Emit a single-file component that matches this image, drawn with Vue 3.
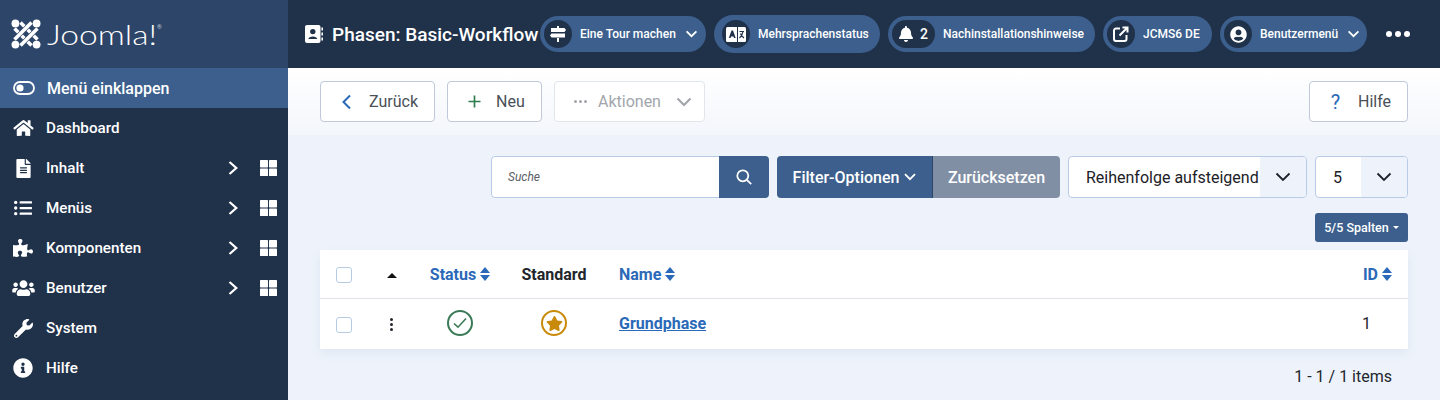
<script setup>
const navItems = [
  { label: 'Dashboard', w: 21, h: 18, box: '0 0 576 512', d: 'M280.37 148.26L96 300.11V464a16 16 0 0 0 16 16l112.06-.29a16 16 0 0 0 15.92-16V368a16 16 0 0 1 16-16h64a16 16 0 0 1 16 16v95.64a16 16 0 0 0 16 16.05L464 480a16 16 0 0 0 16-16V300L295.67 148.26a12.19 12.19 0 0 0-15.3 0zM571.6 251.47L488 182.56V44.05a12 12 0 0 0-12-12h-56a12 12 0 0 0-12 12v72.61L318.47 43a48 48 0 0 0-61 0L4.34 251.47a12 12 0 0 0-1.6 16.9l25.5 31A12 12 0 0 0 45.15 301l235.22-193.74a12.19 12.19 0 0 1 15.3 0L530.9 301a12 12 0 0 0 16.9-1.6l25.5-31a12 12 0 0 0-1.7-16.93z' },
  { label: 'Inhalt', more: true, w: 15, h: 19, box: '0 0 384 512', d: 'M224 136V0H24C10.7 0 0 10.7 0 24v464c0 13.3 10.7 24 24 24h336c13.3 0 24-10.7 24-24V160H248c-13.2 0-24-10.8-24-24zm64 236c0 6.6-5.4 12-12 12H108c-6.6 0-12-5.4-12-12v-8c0-6.6 5.4-12 12-12h168c6.6 0 12 5.4 12 12v8zm0-64c0 6.6-5.4 12-12 12H108c-6.6 0-12-5.4-12-12v-8c0-6.6 5.4-12 12-12h168c6.6 0 12 5.4 12 12v8zm0-72v8c0 6.6-5.4 12-12 12H108c-6.6 0-12-5.4-12-12v-8c0-6.6 5.4-12 12-12h168c6.6 0 12 5.4 12 12zm96-114.1v6.1H256V0h6.1c6.4 0 12.5 2.5 17 7l97.9 98c4.5 4.5 7 10.6 7 16.9z' },
  { label: 'Menüs', more: true, w: 18, h: 18, box: '0 0 512 512', d: 'M48 48a48 48 0 1 0 0 96 48 48 0 0 0 0-96zm0 160a48 48 0 1 0 0 96 48 48 0 0 0 0-96zm0 160a48 48 0 1 0 0 96 48 48 0 0 0 0-96zm448 16H176a16 16 0 0 0-16 16v32a16 16 0 0 0 16 16h320a16 16 0 0 0 16-16v-32a16 16 0 0 0-16-16zm0-320H176a16 16 0 0 0-16 16v32a16 16 0 0 0 16 16h320a16 16 0 0 0 16-16V80a16 16 0 0 0-16-16zm0 160H176a16 16 0 0 0-16 16v32a16 16 0 0 0 16 16h320a16 16 0 0 0 16-16v-32a16 16 0 0 0-16-16z' },
  { label: 'Komponenten', more: true, w: 20, h: 18, box: '0 0 576 512', d: 'M519.442 288.651c-41.519 0-59.5 31.593-82.058 31.593C377.409 320.244 432 144 432 144s-196.288 80-196.288-3.297c0-35.827 36.288-46.25 36.288-85.985C272 19.216 243.885 0 210.539 0c-34.654 0-66.366 18.891-66.366 56.346 0 41.364 31.711 59.277 31.711 81.75C175.885 207.719 0 166.758 0 166.758v333.237s178.635 41.047 178.635-28.662c0-22.473-40-40.107-40-81.471 0-37.456 29.25-56.346 63.577-56.346 33.673 0 61.788 19.216 61.788 54.717 0 39.735-36.288 50.158-36.288 85.985 0 60.803 129.675 25.73 181.23 25.73 0 0-34.725-120.101 25.827-120.101 35.962 0 46.423 36.152 86.308 36.152C556.712 416 576 387.99 576 354.443c0-34.199-18.962-65.792-56.558-65.792z' },
  { label: 'Benutzer', more: true, w: 23, h: 18, box: '0 0 640 512', d: 'M96 224c35.3 0 64-28.7 64-64s-28.7-64-64-64-64 28.7-64 64 28.7 64 64 64zm448 0c35.3 0 64-28.7 64-64s-28.7-64-64-64-64 28.7-64 64 28.7 64 64 64zm32 32h-64c-17.6 0-33.5 7.1-45.1 18.6 40.3 22.1 68.9 62 75.1 109.4h66c17.7 0 32-14.3 32-32v-32c0-35.3-28.7-64-64-64zm-256 0c61.9 0 112-50.1 112-112S381.9 32 320 32 208 82.1 208 144s50.1 112 112 112zm76.8 32h-8.3c-20.8 10-43.9 16-68.5 16s-47.6-6-68.5-16h-8.3C179.6 288 128 339.6 128 403.2V432c0 26.5 21.5 48 48 48h288c26.5 0 48-21.5 48-48v-28.8c0-63.6-51.6-115.2-115.2-115.2zm-223.7-13.4C161.5 263.1 145.6 256 128 256H64c-35.3 0-64 28.7-64 64v32c0 17.7 14.3 32 32 32h65.9c6.3-47.4 34.9-87.3 75.2-109.4z' },
  { label: 'System', w: 19, h: 19, box: '0 0 512 512', d: 'M507.73 109.1c-2.24-9.03-13.54-12.09-20.12-5.51l-74.36 74.36-67.88-11.31-11.31-67.88 74.36-74.36c6.62-6.62 3.43-17.9-5.66-20.16-47.38-11.74-99.55.91-136.58 37.93-39.64 39.64-50.55 97.1-34.05 147.2L18.74 402.76c-24.99 24.99-24.99 65.51 0 90.5 24.99 24.99 65.51 24.99 90.5 0l213.21-213.21c50.12 16.71 107.47 5.68 147.37-34.22 37.07-37.07 49.7-89.32 37.91-136.73zM64 472c-13.25 0-24-10.75-24-24 0-13.26 10.75-24 24-24s24 10.74 24 24c0 13.25-10.75 24-24 24z' },
  { label: 'Hilfe', w: 20, h: 20, box: '0 0 512 512', d: 'M256 8C119.043 8 8 119.083 8 256c0 136.997 111.043 248 248 248s248-111.003 248-248C504 119.083 392.957 8 256 8zm0 110c23.196 0 42 18.804 42 42s-18.804 42-42 42-42-18.804-42-42 18.804-42 42-42zm56 254c0 6.627-5.373 12-12 12h-88c-6.627 0-12-5.373-12-12v-24c0-6.627 5.373-12 12-12h12v-64h-12c-6.627 0-12-5.373-12-12v-24c0-6.627 5.373-12 12-12h64c6.627 0 12 5.373 12 12v100h12c6.627 0 12 5.373 12 12v24z' }
]

const bellPath = 'M224 512c35.32 0 63.97-28.65 63.97-64H160.03c0 35.35 28.65 64 63.97 64zm215.39-149.71c-19.32-20.76-55.47-51.99-55.47-154.29 0-77.7-54.48-139.9-127.94-155.16V32c0-17.67-14.32-32-31.98-32s-31.98 14.33-31.98 32v20.84C118.56 68.1 64.08 130.3 64.08 208c0 102.3-36.15 133.53-55.47 154.29-6 6.45-8.66 14.16-8.61 21.71.11 16.4 12.98 32 32.1 32h383.8c19.12 0 32-15.6 32.1-32 .05-7.55-2.61-15.27-8.61-21.71z'
const userPath = 'M248 8C111 8 0 119 0 256s111 248 248 248 248-111 248-248S385 8 248 8zm0 96c48.6 0 88 39.4 88 88s-39.4 88-88 88-88-39.4-88-88 39.4-88 88-88zm0 344c-58.7 0-111.3-26.6-146.5-68.2 18.8-35.4 55.6-59.8 98.5-59.8 2.4 0 4.8.4 7.1 1.1 13 4.2 26.6 6.9 40.9 6.9 14.3 0 28-2.7 40.9-6.9 2.3-.7 4.7-1.1 7.1-1.1 42.9 0 79.7 24.4 98.5 59.8C359.3 421.4 306.7 448 248 448z'
const starPath = 'M259.3 17.8L194 150.2 47.9 171.5c-26.2 3.8-36.7 36.1-17.7 54.6l105.7 103-25 145.5c-4.5 26.3 23.2 46 46.4 33.7L288 439.6l130.7 68.7c23.2 12.2 50.9-7.4 46.4-33.7l-25-145.5 105.7-103c19-18.5 8.5-50.8-17.7-54.6L382 150.2 316.7 17.8c-11.7-23.6-45.6-23.9-57.4 0z'
</script>

<template>
  <div class="page">
    <aside class="sidebar">
      <div class="logo">
        <svg class="logo-mark" viewBox="0 0 30 30" fill="none">
          <g stroke-width="3.600" stroke="#fff">
            <path d="M3.500 9.500 L20.500 26.500" />
            <path d="M9.500 3.500 L26.500 20.500" />
          </g>
          <g stroke-width="3.600">
            <path d="M26.500 9.500 L9.500 26.500" stroke="#2d4568" stroke-width="4.600" />
            <path d="M26.500 9.500 L9.500 26.500" stroke="#fff" />
            <path d="M20.500 3.500 L3.500 20.500" stroke="#2d4568" stroke-width="4.600" />
            <path d="M20.500 3.500 L3.500 20.500" stroke="#fff" />
          </g>
          <g fill="#fff">
            <circle cx="4.400" cy="4.400" r="3.900" />
            <circle cx="25.600" cy="4.400" r="3.900" />
            <circle cx="4.400" cy="25.600" r="3.900" />
            <circle cx="25.600" cy="25.600" r="3.900" />
          </g>
        </svg>
        <span class="logo-word">Joomla!</span><span class="logo-reg">®</span>
      </div>
      <div class="nav-toggle">
        <svg class="toggle-icon" viewBox="0 0 22 14" fill="none">
          <rect x="1" y="1" width="20" height="12" rx="6" stroke="#fff" stroke-width="1.800" />
          <circle cx="7" cy="7" r="3.600" fill="#fff" />
        </svg>
        Menü einklappen
      </div>
      <nav>
        <div v-for="item in navItems" :key="item.label" class="nav-item">
          <span class="nav-icon">
            <svg :viewBox="item.box" :width="item.w" :height="item.h" fill="#fff"><path :d="item.d" /></svg>
          </span>
          <span class="nav-label">{{ item.label }}</span>
          <template v-if="item.more">
            <svg class="nav-chevron" viewBox="0 0 10 14" fill="none" stroke="#fff" stroke-width="2.200">
              <path d="M1.500 1 L8.300 7 L1.500 13" />
            </svg>
            <svg class="nav-grid" viewBox="0 0 17 16" fill="#fff">
              <rect x="0" y="0" width="8" height="7.400" rx="0.600" />
              <rect x="9" y="0" width="8" height="7.400" rx="0.600" />
              <rect x="0" y="8.600" width="8" height="7.400" rx="0.600" />
              <rect x="9" y="8.600" width="8" height="7.400" rx="0.600" />
            </svg>
          </template>
        </div>
      </nav>
    </aside>

    <main class="main">
      <header class="topbar">
        <svg class="title-icon" viewBox="0 0 18 18">
          <rect x="0" y="0" width="15.500" height="18" rx="2" fill="#fff" />
          <circle cx="7.800" cy="6.600" r="2.700" fill="#20314a" />
          <path d="M3.400 14 C3.400 10.600 12.200 10.600 12.200 14 Z" fill="#20314a" />
          <rect x="16.400" y="2.500" width="1.600" height="3" fill="#fff" />
          <rect x="16.400" y="7.500" width="1.600" height="3" fill="#fff" />
          <rect x="16.400" y="12.500" width="1.600" height="3" fill="#fff" />
        </svg>
        <h1 class="title">Phasen: Basic-Workflow</h1>

        <div class="pills">
          <div class="pill pill-tour">
            <span class="pill-badge">
              <svg viewBox="0 0 16 16" class="pill-svg" fill="#fff">
                <path d="M7 0h2v2h5.500l1.500 2-1.500 2H1V2h6zM1.500 7.500H15v4H1.500L0 9.500zM7 12h2v4H7z" />
              </svg>
            </span>
            <span class="pill-text">Eine Tour machen</span>
            <svg class="pill-chevron" viewBox="0 0 14 9" fill="none" stroke="#fff" stroke-width="2"><path d="M1.500 1.500 L7 7 L12.500 1.500" /></svg>
          </div>
          <div class="pill pill-lang">
            <span class="pill-badge">
              <svg viewBox="0 0 20 15" class="pill-svg-wide">
                <rect x="0" y="0" width="20" height="15" rx="1.500" fill="#fff" />
                <path d="M5.500 3.500 L2.800 11 H4.500 L5 9.500 H7.500 L8 11 H9.700 L7 3.500 Z" fill="#20314a" />
                <rect x="11" y="0" width="1" height="15" fill="#20314a" />
                <path d="M13.500 4.500 H18 M17 4.500 C16.500 7.500 15.500 9.500 13.500 11 M14.500 6.500 C15 8.500 16.500 10 18 11" stroke="#20314a" stroke-width="1.200" fill="none" />
              </svg>
            </span>
            <span class="pill-text">Mehrsprachenstatus</span>
          </div>
          <div class="pill pill-notes">
            <span class="pill-badge pill-badge-count">
              <svg viewBox="0 0 448 512" class="pill-svg-bell" fill="#fff"><path :d="bellPath" /></svg>
              <span class="count">2</span>
            </span>
            <span class="pill-text">Nachinstallationshinweise</span>
          </div>
          <div class="pill pill-site">
            <span class="pill-badge">
              <svg viewBox="0 0 16 16" class="pill-svg" fill="none" stroke="#fff" stroke-width="2">
                <path d="M7 2.500 H3 A2 2 0 0 0 1 4.500 V13 A2 2 0 0 0 3 15 H11.500 A2 2 0 0 0 13.500 13 V9" />
                <path d="M6.500 9.500 L14 2 M9.500 1.500 H14.500 V6.500" />
              </svg>
            </span>
            <span class="pill-text">JCMS6 DE</span>
          </div>
          <div class="pill pill-user">
            <span class="pill-badge">
              <svg viewBox="0 0 496 512" class="pill-svg-user" fill="#fff"><path :d="userPath" /></svg>
            </span>
            <span class="pill-text">Benutzermenü</span>
            <svg class="pill-chevron" viewBox="0 0 14 9" fill="none" stroke="#fff" stroke-width="2"><path d="M1.500 1.500 L7 7 L12.500 1.500" /></svg>
          </div>
        </div>
        <div class="dots"><i></i><i></i><i></i></div>
      </header>

      <div class="toolbar">
        <button class="tool-btn btn-back">
          <svg class="tool-icon" viewBox="0 0 12 16" fill="none" stroke="#2a69b8" stroke-width="2"><path d="M9 1.500 L2.500 8 L9 14.500" /></svg>
          Zurück
        </button>
        <button class="tool-btn btn-new">
          <svg class="tool-icon-plus" viewBox="0 0 14 14" fill="none" stroke="#2f7d4f" stroke-width="1.800"><path d="M7 0.500 V13.500 M0.500 7 H13.500" /></svg>
          Neu
        </button>
        <button class="tool-btn btn-actions">
          <span class="ellipsis"><i></i><i></i><i></i></span>
          Aktionen
          <svg class="actions-chevron" viewBox="0 0 16 10" fill="none" stroke="#a2a6ac" stroke-width="2.200"><path d="M1.500 1.500 L8 8 L14.500 1.500" /></svg>
        </button>
        <button class="tool-btn btn-help">
          <span class="help-mark">?</span>
          Hilfe
        </button>
      </div>

      <section class="content">
        <div class="filters">
          <div class="search">
            <span class="search-input">Suche</span>
            <span class="search-btn">
              <svg viewBox="0 0 16 16" width="16" height="16" fill="none" stroke="#fff" stroke-width="1.800">
                <circle cx="6.800" cy="6.800" r="5.500" />
                <path d="M10.800 10.800 L15.200 15.200" />
              </svg>
            </span>
          </div>
          <div class="filter-group">
            <span class="filter-btn">
              Filter-Optionen
              <svg viewBox="0 0 12 8" width="12" height="8" fill="none" stroke="#fff" stroke-width="1.800"><path d="M1 1.200 L6 6.200 L11 1.200" /></svg>
            </span>
            <span class="reset-btn">Zurücksetzen</span>
          </div>
          <div class="select select-order">
            <span class="select-value">Reihenfolge aufsteigend</span>
            <span class="select-arrow">
              <svg viewBox="0 0 16 10" width="16" height="10" fill="none" stroke="#1c2128" stroke-width="1.800"><path d="M1.500 1.500 L8 8 L14.500 1.500" /></svg>
            </span>
          </div>
          <div class="select select-limit">
            <span class="select-value">5</span>
            <span class="select-arrow">
              <svg viewBox="0 0 16 10" width="16" height="10" fill="none" stroke="#1c2128" stroke-width="1.800"><path d="M1.500 1.500 L8 8 L14.500 1.500" /></svg>
            </span>
          </div>
        </div>

        <div class="columns-row">
          <span class="columns-btn">5/5 Spalten <i class="caret"></i></span>
        </div>

        <table class="list">
          <thead>
            <tr>
              <th class="col-check"><span class="checkbox"></span></th>
              <th class="col-order"><i class="sort-up"></i></th>
              <th class="col-status link"><span class="th-inner">Status <span class="sort"><i></i><i></i></span></span></th>
              <th class="col-default">Standard</th>
              <th class="col-name link"><span class="th-inner">Name <span class="sort"><i></i><i></i></span></span></th>
              <th class="col-id link"><span class="th-inner">ID <span class="sort"><i></i><i></i></span></span></th>
            </tr>
          </thead>
          <tbody>
            <tr>
              <td class="col-check"><span class="checkbox"></span></td>
              <td class="col-order"><span class="drag"><i></i><i></i><i></i></span></td>
              <td class="col-status">
                <span class="state state-ok">
                  <svg viewBox="0 0 14 12" width="14" height="12" fill="none" stroke="#3b7a57" stroke-width="1.600"><path d="M1 6.500 L5 10.200 L13 1.500" /></svg>
                </span>
              </td>
              <td class="col-default">
                <span class="state state-star">
                  <svg viewBox="0 0 576 512" width="17" height="15" fill="#c98a0c"><path :d="starPath" /></svg>
                </span>
              </td>
              <td class="col-name"><a class="name-link">Grundphase</a></td>
              <td class="col-id id-cell">1</td>
            </tr>
          </tbody>
        </table>

        <div class="pager">1 - 1 / 1 items</div>
      </section>
    </main>
  </div>
</template>

<style>
html, body {
  margin: 0;
  background: #eef3fb;
}
</style>

<style scoped>
.page {
  display: flex;
  width: 1440px;
  height: 400px;
  overflow: hidden;
  font-family: Roboto, "Liberation Sans", sans-serif;
  background: #eef3fb;
}

.sidebar {
  width: 288px;
  flex-shrink: 0;
  background: #20314a;
  color: #fff;
}

.logo {
  height: 68px;
  display: flex;
  align-items: center;
  padding-left: 11px;
  box-sizing: border-box;
  background: #2d4568;
}

.logo-mark {
  width: 30px;
  height: 30px;
  margin-right: 6px;
}

/* wordmark is drawn wider than Lato's own proportions */
.logo-word {
  width: 109px;
  font-family: Lato, sans-serif;
  font-weight: 300;
  font-size: 28px;
  line-height: 1;
  transform: scaleX(1.2);
  transform-origin: left center;
}

.logo-reg {
  font-size: 6px;
  margin: -16px 0 0 1px;
  color: #c9d1dc;
}

.nav-toggle {
  height: 40px;
  display: flex;
  align-items: center;
  padding-left: 13px;
  background: #3c5f8d;
  font-size: 16px;
  font-weight: 500;
}

.toggle-icon {
  width: 22px;
  height: 14px;
  margin-right: 12px;
}

.nav-item {
  height: 40px;
  display: flex;
  align-items: center;
  font-size: 15.200px;
  font-weight: 500;
}

.nav-icon {
  width: 46px;
  display: flex;
  justify-content: center;
}

.nav-label {
  flex: 1;
}

.nav-chevron {
  width: 10px;
  height: 14px;
  margin-right: 22px;
}

.nav-grid {
  width: 17px;
  height: 16px;
  margin-right: 11px;
}

.main {
  flex: 1;
  min-width: 0;
}

.topbar {
  height: 68px;
  display: flex;
  align-items: center;
  padding-left: 17px;
  background: #20314a;
  color: #fff;
}

.title-icon {
  width: 18px;
  height: 18px;
  margin-right: 9px;
}

.title {
  margin: 0;
  font-size: 19px;
  font-weight: 500;
  white-space: nowrap;
  width: 208px;
}

.pills {
  display: flex;
  align-items: center;
  gap: 8px;
}

.pill {
  height: 36px;
  display: flex;
  align-items: center;
  box-sizing: border-box;
  padding: 0 4px;
  border-radius: 18px;
  background: #3c5f8d;
}

.pill-tour { width: 166px; }
.pill-lang { width: 166px; height: 38px; border-radius: 19px; padding-left: 8px; }
.pill-notes { width: 207px; }
.pill-site { width: 109px; }
.pill-user { width: 147px; }

.pill-badge {
  width: 28px;
  height: 28px;
  border-radius: 14px;
  background: #20314a;
  display: flex;
  align-items: center;
  justify-content: center;
  flex-shrink: 0;
}

.pill-badge-count {
  width: 43px;
  justify-content: flex-start;
  padding-left: 7px;
  box-sizing: border-box;
  gap: 7px;
}

.count {
  font-size: 14px;
  font-weight: 500;
}

.pill-svg {
  width: 16px;
  height: 16px;
}

.pill-svg-bell {
  width: 14px;
  height: 16px;
}

.pill-svg-user {
  width: 17px;
  height: 17px;
}

.pill-svg-wide {
  width: 20px;
  height: 15px;
}

.pill-text {
  margin-left: 8px;
  font-size: 12px;
  font-weight: 500;
  white-space: nowrap;
}

.pill-chevron {
  width: 13px;
  height: 8px;
  margin-left: 9px;
}

.dots {
  display: flex;
  gap: 3px;
  margin-left: 19px;
}

.dots i {
  width: 6px;
  height: 6px;
  border-radius: 50%;
  background: #fff;
}

.toolbar {
  height: 67px;
  box-sizing: border-box;
  padding: 13px 32px 0;
  display: flex;
  gap: 12px;
  background: linear-gradient(#fff, #f3f6fb);
}

.tool-btn {
  height: 41px;
  display: flex;
  align-items: center;
  box-sizing: border-box;
  border: 1px solid #bfc9d9;
  border-radius: 4px;
  background: #fff;
  color: #495057;
  font-family: inherit;
  font-size: 16px;
  padding: 0;
}

.btn-back { width: 115px; padding-left: 20px; gap: 16px; }
.btn-new { width: 95px; padding-left: 20px; gap: 15px; }
.btn-actions {
  width: 151px;
  padding-left: 19px;
  color: #a2a6ac;
  border-color: #e2e6ec;
}
.btn-help { width: 99px; padding-left: 20px; gap: 17px; margin-left: auto; }

.tool-icon {
  width: 12px;
  height: 16px;
}

.tool-icon-plus {
  width: 13px;
  height: 13px;
}

.ellipsis {
  display: flex;
  gap: 2px;
  margin-right: 11px;
}

.ellipsis i {
  width: 3px;
  height: 3px;
  border-radius: 50%;
  background: #a2a6ac;
}

.actions-chevron {
  width: 16px;
  height: 10px;
  margin-left: 15px;
}

.help-mark {
  width: 11px;
  color: #2a69b8;
  font-size: 20px;
}

.content {
  padding: 21px 32px 0;
}

.filters {
  display: flex;
  justify-content: flex-end;
  gap: 8px;
  height: 42px;
}

.search {
  width: 278px;
  display: flex;
  border-radius: 4px;
  overflow: hidden;
}

.search-input {
  flex: 1;
  box-sizing: border-box;
  display: flex;
  align-items: center;
  padding-left: 16px;
  font-size: 12px;
  font-style: italic;
  color: #5c6066;
  background: #fff;
  border: 1px solid #b7cbe6;
  border-right: 0;
  border-radius: 4px 0 0 4px;
}

.search-btn {
  width: 50px;
  background: #3c5f8d;
  display: flex;
  align-items: center;
  justify-content: center;
}

.filter-group {
  display: flex;
  color: #fff;
  font-size: 16px;
  font-weight: 500;
}

.filter-btn {
  width: 156px;
  display: flex;
  align-items: center;
  justify-content: center;
  gap: 5px;
  background: #3c5f8d;
  border-right: 1px solid #2d4568;
  box-sizing: border-box;
  border-radius: 4px 0 0 4px;
}

.reset-btn {
  width: 127px;
  display: flex;
  align-items: center;
  justify-content: center;
  background: #818fa5;
  border-radius: 0 4px 4px 0;
}

.select {
  display: flex;
  box-sizing: border-box;
  border: 1px solid #b7cbe6;
  border-radius: 4px;
  overflow: hidden;
  background: #fff;
  font-size: 16px;
  color: #1c2128;
}

.select-order { width: 239px; }
.select-limit { width: 93px; }

.select-value {
  flex: 1;
  display: flex;
  align-items: center;
  padding-left: 17px;
  white-space: nowrap;
}

.select-arrow {
  width: 46px;
  flex-shrink: 0;
  background: #eef3fb;
  display: flex;
  align-items: center;
  justify-content: center;
}

.columns-row {
  display: flex;
  justify-content: flex-end;
  margin-top: 15px;
}

.columns-btn {
  width: 93px;
  height: 29px;
  display: flex;
  align-items: center;
  justify-content: center;
  gap: 4px;
  background: #3c5f8d;
  color: #fff;
  font-size: 12.500px;
  font-weight: 500;
  border-radius: 3px;
}

.caret {
  border-top: 3px solid #fff;
  border-left: 3px solid transparent;
  border-right: 3px solid transparent;
}

.list {
  width: 100%;
  margin-top: 8px;
  border-collapse: collapse;
  background: #fff;
  box-shadow: 0 4px 10px rgba(60, 90, 140, 0.08);
  font-size: 16px;
  color: #22262c;
}

.list th {
  height: 48px;
  padding: 0;
  font-weight: 700;
  border-bottom: 1px solid #dfe2e8;
}

.list td {
  height: 50px;
  padding: 0 0 1px;
  box-sizing: border-box;
}

.col-check { width: 48px; text-align: center; }
.col-order { width: 48px; text-align: center; }
.col-status { width: 88px; text-align: center; }
.col-default { width: 100px; text-align: center; }
.col-name { text-align: left; padding-left: 15px !important; }
.col-id { width: 100px; text-align: right; padding-right: 16px !important; }

.link {
  color: #2a69b8;
}

.th-inner {
  display: inline-flex;
  align-items: center;
  gap: 4px;
}

.checkbox {
  display: inline-block;
  vertical-align: middle;
  width: 16px;
  height: 16px;
  box-sizing: border-box;
  border: 1px solid #b7cbe6;
  border-radius: 3px;
  background: #fff;
}

.sort-up {
  display: inline-block;
  vertical-align: middle;
  border-bottom: 5px solid #111;
  border-left: 5px solid transparent;
  border-right: 5px solid transparent;
}

.sort {
  display: inline-flex;
  flex-direction: column;
  gap: 2px;
}

.sort i {
  display: block;
  border-left: 5px solid transparent;
  border-right: 5px solid transparent;
}

.sort i:first-child {
  border-bottom: 6px solid #2a69b8;
}

.sort i:last-child {
  border-top: 6px solid #2a69b8;
}

.drag {
  display: inline-flex;
  flex-direction: column;
  gap: 2px;
  vertical-align: middle;
  margin-right: 2px;
}

.drag i {
  width: 3px;
  height: 3px;
  border-radius: 50%;
  background: #22262c;
}

.state {
  display: inline-flex;
  width: 26px;
  height: 26px;
  box-sizing: border-box;
  align-items: center;
  justify-content: center;
  border-radius: 50%;
  vertical-align: middle;
}

.state-ok {
  border: 2px solid #3b7a57;
}

.state-star {
  border: 2px solid #c98a0c;
}

.name-link {
  color: #2a69b8;
  font-weight: 700;
  text-decoration: underline;
}

.id-cell {
  padding-right: 37px !important;
  font-weight: 400;
}

.pager {
  margin-top: 18px;
  padding-right: 16px;
  text-align: right;
  font-size: 16px;
  color: #22262c;
}
</style>
